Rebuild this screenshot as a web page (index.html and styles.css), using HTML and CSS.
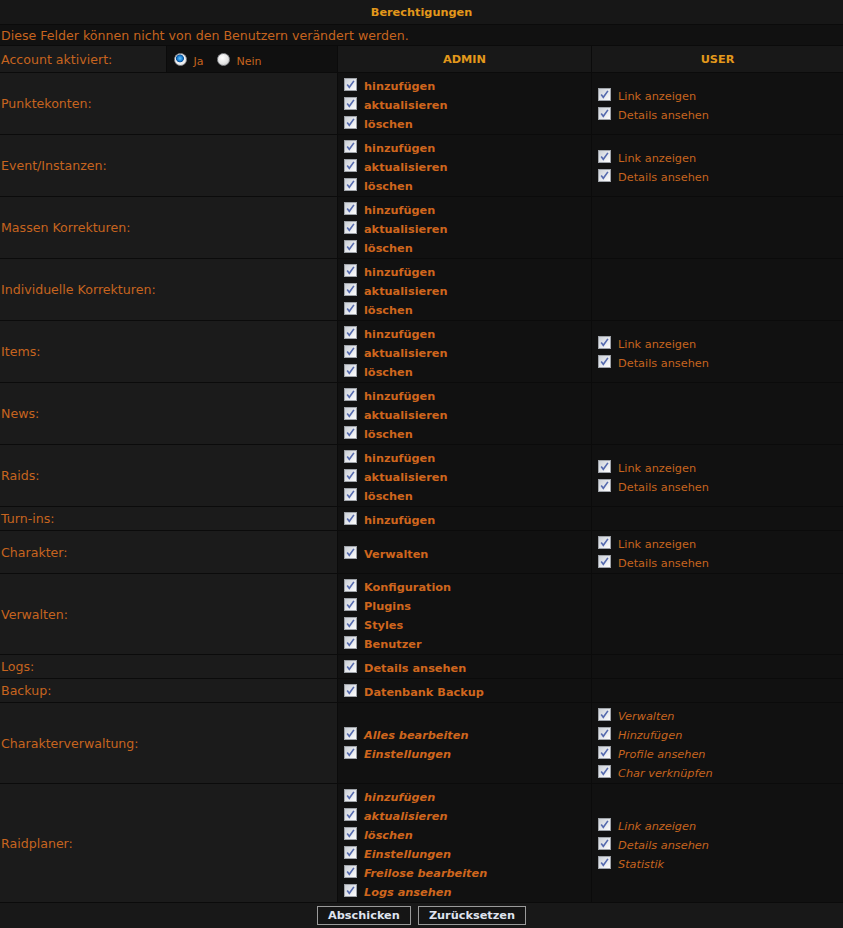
FILE: index.html
```html
<!DOCTYPE html>
<html lang="de">
<head>
    <meta charset="UTF-8">
    <title>Berechtigungen</title>
    <link rel="stylesheet" href="styles.css">
</head>
<body>
<form class="perm-form">
<table class="perm">
    <colgroup>
        <col class="c-a"><col class="c-b"><col class="c-admin"><col class="c-user">
    </colgroup>
    <tr>
        <td colspan="4" class="title">Berechtigungen</td>
    </tr>
    <tr>
        <td colspan="4" class="note">Diese Felder können nicht von den Benutzern verändert werden.</td>
    </tr>
    <tr class="head-row">
        <td class="label">Account aktiviert:</td>
        <td class="radios">
            <input type="radio" name="active" checked> <span>Ja</span>
            <input type="radio" name="active"> <span>Nein</span>
        </td>
        <td class="head sep">ADMIN</td>
        <td class="head sep">USER</td>
    </tr>
    <tr>
        <td colspan="2" class="label">Punktekonten:</td>
        <td class="admin sep">
            <label class="opt"><input type="checkbox" checked><span>hinzufügen</span></label>
            <label class="opt"><input type="checkbox" checked><span>aktualisieren</span></label>
            <label class="opt"><input type="checkbox" checked><span>löschen</span></label>
        </td>
        <td class="user sep">
            <label class="opt"><input type="checkbox" checked><span>Link anzeigen</span></label>
            <label class="opt"><input type="checkbox" checked><span>Details ansehen</span></label>
        </td>
    </tr>
    <tr>
        <td colspan="2" class="label">Event/Instanzen:</td>
        <td class="admin sep">
            <label class="opt"><input type="checkbox" checked><span>hinzufügen</span></label>
            <label class="opt"><input type="checkbox" checked><span>aktualisieren</span></label>
            <label class="opt"><input type="checkbox" checked><span>löschen</span></label>
        </td>
        <td class="user sep">
            <label class="opt"><input type="checkbox" checked><span>Link anzeigen</span></label>
            <label class="opt"><input type="checkbox" checked><span>Details ansehen</span></label>
        </td>
    </tr>
    <tr>
        <td colspan="2" class="label">Massen Korrekturen:</td>
        <td class="admin sep">
            <label class="opt"><input type="checkbox" checked><span>hinzufügen</span></label>
            <label class="opt"><input type="checkbox" checked><span>aktualisieren</span></label>
            <label class="opt"><input type="checkbox" checked><span>löschen</span></label>
        </td>
        <td class="user sep"></td>
    </tr>
    <tr>
        <td colspan="2" class="label">Individuelle Korrekturen:</td>
        <td class="admin sep">
            <label class="opt"><input type="checkbox" checked><span>hinzufügen</span></label>
            <label class="opt"><input type="checkbox" checked><span>aktualisieren</span></label>
            <label class="opt"><input type="checkbox" checked><span>löschen</span></label>
        </td>
        <td class="user sep"></td>
    </tr>
    <tr>
        <td colspan="2" class="label">Items:</td>
        <td class="admin sep">
            <label class="opt"><input type="checkbox" checked><span>hinzufügen</span></label>
            <label class="opt"><input type="checkbox" checked><span>aktualisieren</span></label>
            <label class="opt"><input type="checkbox" checked><span>löschen</span></label>
        </td>
        <td class="user sep">
            <label class="opt"><input type="checkbox" checked><span>Link anzeigen</span></label>
            <label class="opt"><input type="checkbox" checked><span>Details ansehen</span></label>
        </td>
    </tr>
    <tr>
        <td colspan="2" class="label">News:</td>
        <td class="admin sep">
            <label class="opt"><input type="checkbox" checked><span>hinzufügen</span></label>
            <label class="opt"><input type="checkbox" checked><span>aktualisieren</span></label>
            <label class="opt"><input type="checkbox" checked><span>löschen</span></label>
        </td>
        <td class="user sep"></td>
    </tr>
    <tr>
        <td colspan="2" class="label">Raids:</td>
        <td class="admin sep">
            <label class="opt"><input type="checkbox" checked><span>hinzufügen</span></label>
            <label class="opt"><input type="checkbox" checked><span>aktualisieren</span></label>
            <label class="opt"><input type="checkbox" checked><span>löschen</span></label>
        </td>
        <td class="user sep">
            <label class="opt"><input type="checkbox" checked><span>Link anzeigen</span></label>
            <label class="opt"><input type="checkbox" checked><span>Details ansehen</span></label>
        </td>
    </tr>
    <tr>
        <td colspan="2" class="label">Turn-ins:</td>
        <td class="admin sep">
            <label class="opt"><input type="checkbox" checked><span>hinzufügen</span></label>
        </td>
        <td class="user sep"></td>
    </tr>
    <tr>
        <td colspan="2" class="label">Charakter:</td>
        <td class="admin sep">
            <label class="opt"><input type="checkbox" checked><span>Verwalten</span></label>
        </td>
        <td class="user sep">
            <label class="opt"><input type="checkbox" checked><span>Link anzeigen</span></label>
            <label class="opt"><input type="checkbox" checked><span>Details ansehen</span></label>
        </td>
    </tr>
    <tr>
        <td colspan="2" class="label">Verwalten:</td>
        <td class="admin sep">
            <label class="opt"><input type="checkbox" checked><span>Konfiguration</span></label>
            <label class="opt"><input type="checkbox" checked><span>Plugins</span></label>
            <label class="opt"><input type="checkbox" checked><span>Styles</span></label>
            <label class="opt"><input type="checkbox" checked><span>Benutzer</span></label>
        </td>
        <td class="user sep"></td>
    </tr>
    <tr>
        <td colspan="2" class="label">Logs:</td>
        <td class="admin sep">
            <label class="opt"><input type="checkbox" checked><span>Details ansehen</span></label>
        </td>
        <td class="user sep"></td>
    </tr>
    <tr>
        <td colspan="2" class="label">Backup:</td>
        <td class="admin sep">
            <label class="opt"><input type="checkbox" checked><span>Datenbank Backup</span></label>
        </td>
        <td class="user sep"></td>
    </tr>
    <tr class="plugin">
        <td colspan="2" class="label">Charakterverwaltung:</td>
        <td class="admin sep">
            <label class="opt"><input type="checkbox" checked><span>Alles bearbeiten</span></label>
            <label class="opt"><input type="checkbox" checked><span>Einstellungen</span></label>
        </td>
        <td class="user sep">
            <label class="opt"><input type="checkbox" checked><span>Verwalten</span></label>
            <label class="opt"><input type="checkbox" checked><span>Hinzufügen</span></label>
            <label class="opt"><input type="checkbox" checked><span>Profile ansehen</span></label>
            <label class="opt"><input type="checkbox" checked><span>Char verknüpfen</span></label>
        </td>
    </tr>
    <tr class="plugin">
        <td colspan="2" class="label">Raidplaner:</td>
        <td class="admin sep">
            <label class="opt"><input type="checkbox" checked><span>hinzufügen</span></label>
            <label class="opt"><input type="checkbox" checked><span>aktualisieren</span></label>
            <label class="opt"><input type="checkbox" checked><span>löschen</span></label>
            <label class="opt"><input type="checkbox" checked><span>Einstellungen</span></label>
            <label class="opt"><input type="checkbox" checked><span>Freilose bearbeiten</span></label>
            <label class="opt"><input type="checkbox" checked><span>Logs ansehen</span></label>
        </td>
        <td class="user sep">
            <label class="opt"><input type="checkbox" checked><span>Link anzeigen</span></label>
            <label class="opt"><input type="checkbox" checked><span>Details ansehen</span></label>
            <label class="opt"><input type="checkbox" checked><span>Statistik</span></label>
        </td>
    </tr>
    <tr>
        <td colspan="4" class="actions">
            <button type="submit" class="btn">Abschicken</button>
            <button type="reset" class="btn">Zurücksetzen</button>
        </td>
    </tr>
</table>
</form>
</body>
</html>
```

FILE: styles.css
```css
body {
    margin: 0;
    background: #0b0b0b;
    font-family: Verdana, "DejaVu Sans", sans-serif;
    color: #c6641f;
}
.perm-form {
    margin: 0;
}
.perm {
    width: 843px;
    border-collapse: separate;
    border-spacing: 0;
    table-layout: fixed;
}
.c-a {
    width: 167px;
}
.c-b {
    width: 170px;
}
.c-admin {
    width: 254px;
}
.c-user {
    width: 252px;
}
.perm td {
    padding: 2px;
    border-bottom: 1px solid #0b0b0b;
    background: #111111;
    vertical-align: middle;
}
.perm td.sep {
    border-left: 1px solid #0b0b0b;
}
.title {
    text-align: center;
    font-weight: bold;
    font-size: 11.3px;
    line-height: 14px;
    color: #e3981b;
    padding: 6px 2px 4px !important;
    background: #171717 !important;
}
.note {
    font-size: 12.6px;
    line-height: 14px;
    padding: 4px 1px 2px !important;
}
.label {
    font-size: 12.6px;
    padding: 2px 2px 2px 1px !important;
    background: #1b1b1b !important;
}
.head-row td {
    height: 21px;
    padding-top: 3px;
    padding-bottom: 2px;
}
.head-row .label {
    border-right: 1px solid #0b0b0b;
}
.head {
    text-align: center;
    font-weight: bold;
    font-size: 11.3px;
    color: #e3981b;
    background: #181818 !important;
}
.radios {
    font-size: 11px;
    background: #101010 !important;
}
.radios span {
    position: relative;
    top: 2px;
}
.radios input {
    appearance: none;
    width: 13px;
    height: 13px;
    margin: 0 3px 0 5px;
    border-radius: 50%;
    border: 1px solid #8d8f93;
    background: radial-gradient(circle at 40% 35%, #ffffff 0%, #e6e6e6 55%, #b8b8b8 100%);
    vertical-align: middle;
}
.radios input:checked {
    background: radial-gradient(circle at 45% 40%, #5ec1ff 0%, #1a7fd0 28%, #0a4f96 40%, #f4f4f4 48%, #d6d6d6 100%);
}
.radios input + span + input {
    margin-left: 10px;
}
.opt {
    display: flex;
    align-items: center;
    height: 19px;
    font-size: 11.3px;
    white-space: nowrap;
}
.opt span {
    padding-top: 4px;
}
.admin .opt {
    font-weight: bold;
    color: #cf661d;
}
.plugin .opt {
    font-style: italic;
}
.opt input {
    appearance: none;
    flex: none;
    width: 13px;
    height: 13px;
    margin: 0 7px 0 4px;
    background: url("data:image/svg+xml,%3Csvg xmlns='http://www.w3.org/2000/svg' width='13' height='13'%3E%3Cdefs%3E%3ClinearGradient id='g' x1='0' y1='0' x2='1' y2='1'%3E%3Cstop offset='0' stop-color='%23c9ced6'/%3E%3Cstop offset='1' stop-color='%23ffffff'/%3E%3C/linearGradient%3E%3C/defs%3E%3Crect x='.5' y='.5' width='12' height='12' fill='url(%23g)' stroke='%239ea2a8'/%3E%3Cpath d='M3.2 6.6l2.1 2.7 4.6-6.4' fill='none' stroke='%23556aae' stroke-width='1.6'/%3E%3C/svg%3E") no-repeat;
}
.actions {
    text-align: center;
    background: #181818 !important;
    padding: 1px 2px 4px !important;
}
.btn {
    font-family: Verdana, "DejaVu Sans", sans-serif;
    font-size: 11.3px;
    font-weight: bold;
    color: #dfe3ee;
    background: #151515;
    border: 1px solid #9a9a9a;
    height: 19px;
    padding: 0 10px;
    margin: 0 1px;
    cursor: pointer;
}
```
